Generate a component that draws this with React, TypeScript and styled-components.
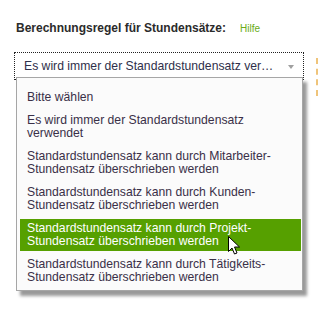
import React from 'react';
import styled, { createGlobalStyle } from 'styled-components';

const GlobalStyle = createGlobalStyle`
  html, body {
    margin: 0;
    padding: 0;
    background: #ffffff;
  }
  body {
    font-family: "Liberation Sans", Arial, sans-serif;
    color: #333;
  }
`;

const Page = styled.div`
  width: 318px;
  height: 317px;
  overflow: hidden;
  padding: 20px 0 0 14px;
  box-sizing: border-box;
  position: relative;
`;

const LabelRow = styled.div`
  display: flex;
  align-items: baseline;
  gap: 14px;
  padding-left: 2px;
  height: 16px;
`;

const Label = styled.span`
  font-size: 12px;
  line-height: 16px;
  font-weight: 700;
  color: #2b2b2b;
`;

const HelpLink = styled.a`
  font-size: 10px;
  color: #6aab16;
  text-decoration: none;
`;

const FieldRow = styled.div`
  display: flex;
  margin-top: 16px;
  align-items: flex-start;
`;

const SelectWrap = styled.div`
  position: relative;
  width: 290px;
  flex-shrink: 0;
`;

const SelectBox = styled.div`
  height: 28px;
  box-sizing: border-box;
  border: 1px dotted #222;
  background: #fff;
  display: flex;
  align-items: center;
  padding: 0 9px;
  font-size: 12.2px;
  color: #2f2f4a;
`;

const SelectValue = styled.span`
  flex: 1;
  white-space: nowrap;
  overflow: hidden;
`;

const Caret = styled.span`
  width: 0;
  height: 0;
  border-left: 3.5px solid transparent;
  border-right: 3.5px solid transparent;
  border-top: 4px solid #a0a0a0;
  margin-top: 2px;
`;

const SideHint = styled.div`
  margin: 6px 0 0 12px;
  width: 0;
  height: 38px;
  flex-shrink: 0;
  border-left: 2px dashed #efc47a;
`;

const Dropdown = styled.ul`
  position: absolute;
  top: 25px;
  left: 2px;
  width: 287px;
  box-sizing: border-box;
  margin: 0;
  padding: 10px 1px 3px 3px;
  list-style: none;
  background: #fbfbfb;
  border: 1px solid #a6a6a6;
  box-shadow: 4px 5px 3px rgba(0, 0, 0, 0.4);
  display: flex;
  flex-direction: column;
  gap: 4px;
`;

const Option = styled.li<{ $active?: boolean }>`
  padding: 3px 7px;
  font-size: 12.2px;
  line-height: 13px;
  color: ${({ $active }) => ($active ? '#ffffff' : '#3a3048')};
  background: ${({ $active }) => ($active ? '#56a000' : 'transparent')};
  position: relative;
`;

const Cursor = styled.svg`
  position: absolute;
  left: 208px;
  top: 17px;
`;

const options = [
  'Bitte wählen',
  'Es wird immer der Standardstundensatz verwendet',
  'Standardstundensatz kann durch Mitarbeiter-Stundensatz überschrieben werden',
  'Standardstundensatz kann durch Kunden-Stundensatz überschrieben werden',
  'Standardstundensatz kann durch Projekt-Stundensatz überschrieben werden',
  'Standardstundensatz kann durch Tätigkeits-Stundensatz überschrieben werden',
];

const splitLabel = (text: string) => {
  const i = text.indexOf('-');
  if (i < 0) return text;
  return (
    <>
      {text.slice(0, i + 1)}
      <br />
      {text.slice(i + 1)}
    </>
  );
};

export default function App() {
  return (
    <>
      <GlobalStyle />
      <Page>
        <LabelRow>
          <Label>Berechnungsregel für Stundensätze:</Label>
          <HelpLink href="#">Hilfe</HelpLink>
        </LabelRow>
        <FieldRow>
          <SelectWrap>
            <SelectBox>
              <SelectValue>Es wird immer der Standardstundensatz ver…</SelectValue>
              <Caret />
            </SelectBox>
            <Dropdown>
              {options.map((opt, i) => (
                <Option key={i} $active={i === 4}>
                  {i === 1 ? (
                    <>
                      Es wird immer der Standardstundensatz
                      <br />
                      verwendet
                    </>
                  ) : (
                    splitLabel(opt)
                  )}
                  {i === 4 && (
                    <Cursor width="13" height="20" viewBox="0 0 13 20">
                      <path
                        d="M0.5 0.5 L0.5 15.5 L4 12 L6.5 18 L9 17 L6.5 11 L11.5 11 Z"
                        fill="#fff"
                        stroke="#000"
                        strokeWidth="1"
                        strokeLinejoin="miter"
                      />
                    </Cursor>
                  )}
                </Option>
              ))}
            </Dropdown>
          </SelectWrap>
          <SideHint />
        </FieldRow>
      </Page>
    </>
  );
}
